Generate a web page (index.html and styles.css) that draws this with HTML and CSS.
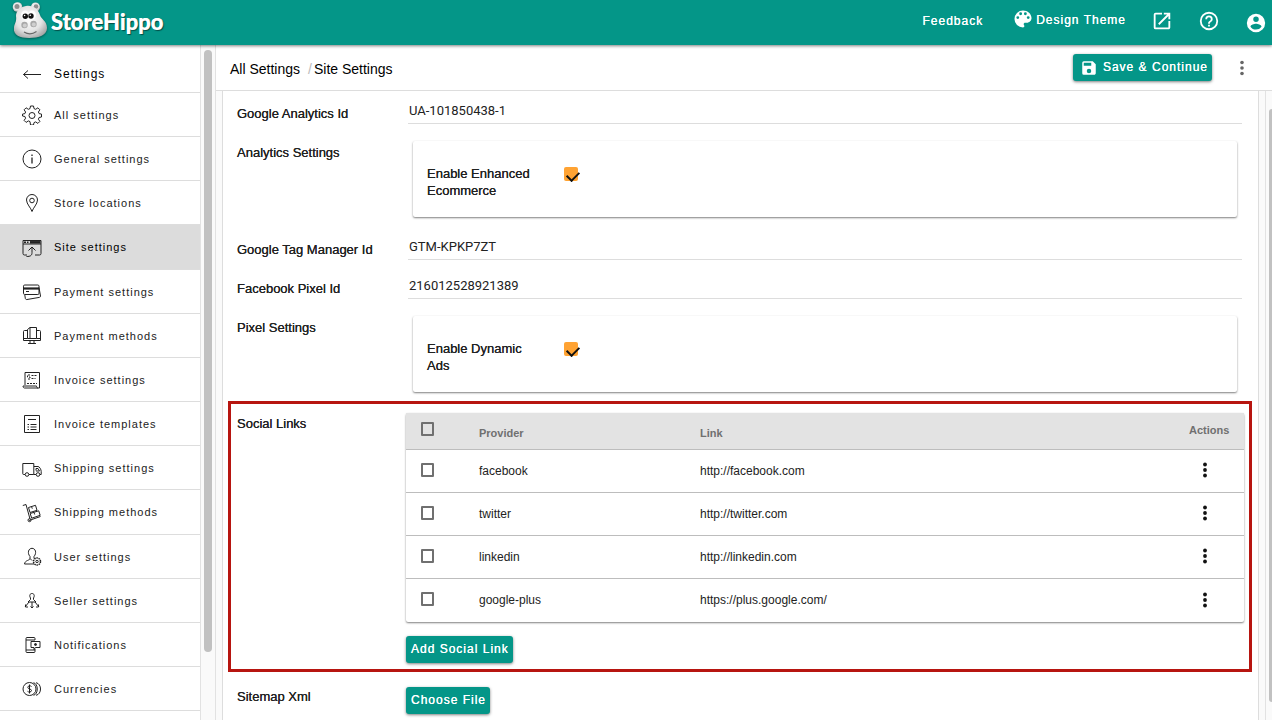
FILE: index.html
```html
<!DOCTYPE html>
<html lang="en">
<head>
<meta charset="utf-8">
<title>Site Settings</title>
<link rel="stylesheet" href="styles.css">
</head>
<body>
<header class="topbar">
  <a class="brand" href="#">
    <svg class="hippo" viewBox="0 0 36 38" aria-hidden="true">
      <defs>
        <radialGradient id="skin" cx="45%" cy="40%" r="65%"><stop offset="0" stop-color="#fff"/><stop offset=".6" stop-color="#e4e4e4"/><stop offset="1" stop-color="#a5a5a5"/></radialGradient>
      </defs>
      <circle cx="5.500" cy="6" r="4.800" fill="url(#skin)"/><circle cx="5" cy="5.500" r="2.500" fill="#8d8d8d"/>
      <circle cx="23.500" cy="6" r="4.500" fill="url(#skin)"/><circle cx="24" cy="5.500" r="2.300" fill="#8d8d8d"/>
      <path d="M14 5C21 4 26 8 28 14C29 18 35 20 35 27C35 34 27 37 17 37C8 37 1 34 2 27C2 23 5 21 4 15C4 10 8 6 14 5Z" fill="url(#skin)"/>
      <ellipse cx="13" cy="14" rx="4" ry="4.500" fill="#fff"/><ellipse cx="20" cy="14" rx="4" ry="4.500" fill="#fff"/>
      <ellipse cx="13.300" cy="15.300" rx="2.700" ry="2.700" fill="#111"/><ellipse cx="19" cy="15" rx="2.700" ry="2.700" fill="#111"/>
      <circle cx="12.600" cy="14.500" r=".8" fill="#fff"/><circle cx="18.300" cy="14.200" r=".8" fill="#fff"/>
      <circle cx="12.500" cy="24" r="3.200" fill="#a8a8a8"/><circle cx="12.800" cy="24.400" r="2" fill="#cfcfcf"/>
      <circle cx="21.500" cy="23" r="3.200" fill="#a8a8a8"/><circle cx="21.800" cy="23.400" r="2" fill="#cfcfcf"/>
      <path d="M12 31C16 33.500 21 33 24.500 30.500" fill="none" stroke="#666" stroke-width="1.200"/>
    </svg>
    <span>StoreHippo</span>
  </a>
  <nav class="tools">
    <a class="feedback" href="#">Feedback</a>
    <a class="theme" href="#">
      <svg class="i18" viewBox="2.500 2.500 19 19"><path fill="currentColor" d="M12 3a9 9 0 0 0 0 18c.830 0 1.500-.670 1.500-1.500 0-.390-.150-.740-.390-1.010-.230-.260-.380-.610-.380-.990 0-.830.670-1.500 1.500-1.500H16c2.760 0 5-2.240 5-5 0-4.420-4.030-8-9-8zm-5.500 9a1.500 1.500 0 1 1 0-3 1.500 1.500 0 0 1 0 3zm3-4a1.500 1.500 0 1 1 0-3 1.500 1.500 0 0 1 0 3zm5 0a1.500 1.500 0 1 1 0-3 1.500 1.500 0 0 1 0 3zm3 4a1.500 1.500 0 1 1 0-3 1.500 1.500 0 0 1 0 3z"/></svg>
      <span>Design Theme</span>
    </a>
    <button class="tool" aria-label="Open in new window"><svg class="i22" viewBox="0 0 24 24"><path fill="currentColor" d="M19 19H5V5h7V3H5a2 2 0 0 0-2 2v14a2 2 0 0 0 2 2h14c1.100 0 2-.9 2-2v-7h-2v7zM14 3v2h3.590l-9.830 9.830 1.410 1.410L19 6.410V10h2V3h-7z"/></svg></button>
    <button class="tool" aria-label="Help"><svg class="i22" viewBox="0 0 24 24"><path fill="currentColor" d="M11 18h2v-2h-2v2zm1-16a10 10 0 1 0 0 20 10 10 0 0 0 0-20zm0 18a8 8 0 1 1 0-16 8 8 0 0 1 0 16zm0-14a4 4 0 0 0-4 4h2c0-1.100.9-2 2-2s2 .9 2 2c0 2-3 1.750-3 5h2c0-2.250 3-2.500 3-5a4 4 0 0 0-4-4z"/></svg></button>
    <button class="tool account" aria-label="Account"><svg class="i22" viewBox="0 0 24 24"><path fill="currentColor" d="M12 2a10 10 0 1 0 0 20 10 10 0 0 0 0-20zm0 3a3 3 0 1 1 0 6 3 3 0 0 1 0-6zm0 14.200a7.200 7.200 0 0 1-6-3.220c.030-1.990 4-3.080 6-3.080 1.990 0 5.970 1.090 6 3.080a7.200 7.200 0 0 1-6 3.220z"/></svg></button>
  </nav>
</header>

<div class="workspace">
  <nav class="sidebar">
    <a class="item head" href="#"><svg class="ico" viewBox="0 0 20 20"><path d="M19 10.500H1.500M6 6.500L1.500 10.500L6 14.500"/></svg>Settings</a>
    <a class="item" href="#"><svg class="ico" viewBox="0 0 20 20"><path d="M8.500 1h3l.5 2.600 1.700.7 2.200-1.500 2 2-1.500 2.200.7 1.600 2.400.5v2.900l-2.400.5-.7 1.700 1.500 2.200-2 2-2.200-1.500-1.700.7-.5 2.400h-3L8 16.600l-1.700-.7-2.200 1.500-2-2 1.500-2.200-.7-1.700-2.400-.5V9.100l2.400-.5.7-1.600-1.500-2.200 2-2 2.200 1.500L8 3.600z"/><circle cx="10" cy="10.500" r="3"/></svg>All settings</a>
    <a class="item" href="#"><svg class="ico" viewBox="0 0 20 20"><circle cx="10" cy="10" r="9"/><path d="M10 8.500v6M10 5.500v1.500" stroke-width="1.300"/></svg>General settings</a>
    <a class="item" href="#"><svg class="ico" viewBox="0 0 20 20"><path d="M10 18.500C9 15 4.500 11 4.500 7a5.500 5.500 0 0 1 11 0c0 4-4.500 8-5.500 11.500z"/><circle cx="10" cy="7.500" r="2.300"/></svg>Store locations</a>
    <a class="item active" href="#"><svg class="ico" viewBox="0 0 20 20"><path d="M5 17H2.500A1.500 1.500 0 0 1 1 15.500v-13h18v13a1.500 1.500 0 0 1-1.500 1.500H13M1 6h18"/><path d="M2 4.300h2M5 4.300h1.500" stroke-width="1.500"/><path d="M8 4.300h10.500" stroke-width="2.500"/><path d="M4.500 18.500c4 0 5.500-1 5.500-4V9M6.500 12.500L10 9l3.500 3.500"/></svg>Site settings</a>
    <a class="item" href="#"><svg class="ico" viewBox="0 0 20 20"><rect x="1.500" y="3" width="15.500" height="9.500" rx="1.200"/><path d="M2 6.500h15" stroke-width="2.200"/><path d="M4 9.500h3"/><path d="M17 5.500l1.500 8.500c0 1-.5 1.300-1.200 1.400L5 17.500c-1 .2-1.500-.3-1.700-1.200L2.800 13"/></svg>Payment settings</a>
    <a class="item" href="#"><svg class="ico" viewBox="0 0 20 20"><path d="M5.500 4.500H2.500A1 1 0 0 0 1.500 5.500v9h17v-9a1 1 0 0 0-1-1h-3M1.500 12.500h4M14.500 12.500h4M8 15v2M12 15v2M6 17.500h8"/><path d="M5.500 12.500v-9L8 1.500h6.500v11zM8 1.500v11"/></svg>Payment methods</a>
    <a class="item" href="#"><svg class="ico" viewBox="0 0 20 20"><path d="M3 15V2.500h14.500v15.500H2.500c-1 0-1.500-1-1.500-2h13.500c0 1 .5 2 1.500 2"/><path d="M8 5H5.500v2H8v2H5.500M9.500 5.500h5M9.500 8.500h4M5 13.500h10" stroke-dasharray="2 1"/></svg>Invoice settings</a>
    <a class="item" href="#"><svg class="ico" viewBox="0 0 20 20"><path d="M2.500 1.500h15v17h-15zM6 5.500h8M8.500 10.500h6M8.500 13h6M8.500 15.500h6"/><path d="M5.500 10.500h1.500M5.500 13h1.500M5.500 15.500h1.500"/></svg>Invoice templates</a>
    <a class="item" href="#"><svg class="ico" viewBox="0 0 20 20"><path d="M3 16.500H1.500a.7.700 0 0 1-.7-.7V5.500h11v11H7M12 8.500h4c1.500 0 3.200 3 3.200 5v3h-1.400M14 12.500V10.500h2l1.500 2.500h-3.500M12 16.500h2"/><circle cx="5" cy="16.500" r="1.800"/><circle cx="16" cy="16.500" r="1.800"/></svg>Shipping settings</a>
    <a class="item tall" href="#"><svg class="ico" viewBox="0 0 20 20"><path d="M.8 2.500L4 1.500l4 14.500M7 17.500l11.500-4M6.500 4.500l7-2.200 1.500 5-7 2.200zM8.200 10.500l8.500-2.700 1.500 4.500-8.500 2.900zM9.500 3.500l.8 2.200M12 9.500l.7 2"/><circle cx="7.500" cy="17.200" r="1.500"/></svg>Shipping methods</a>
    <a class="item" href="#"><svg class="ico" viewBox="0 0 20 20"><path d="M8 11.500V9.500C5 6 6.500 1.300 10 1.300S15 6 12 9.500v2M8 11.500c0 2-5 1.500-5.500 5.500H12M8 11.500l2 2"/><circle cx="15" cy="14.500" r="3.500" stroke-dasharray="1.500 .7" stroke-width="1.500"/><circle cx="15" cy="14.500" r="1.200"/></svg>User settings</a>
    <a class="item" href="#"><svg class="ico" viewBox="0 0 20 20"><path d="M8.500 7C7 4.500 8 2.500 10 2.500S13 4.500 11.500 7v1.500l2.500 2.500H6l2.500-2.500zM10 11v6M7 11l-4 5M13 11l4 5M3.500 13.500v2.500H6M16.500 13.500v2.500H14M8.500 15.500L10 17l1.500-1.500"/></svg>Seller settings</a>
    <a class="item" href="#"><svg class="ico" viewBox="0 0 20 20"><path d="M13 5V3.500a1 1 0 0 0-1-1H5a1 1 0 0 0-1 1v13a1 1 0 0 0 1 1h7a1 1 0 0 0 1-1V14M4 5h9M4 15h9"/><path d="M9 6.500h9v6h-4.500L12 14.500v-2H9z"/><circle cx="13.500" cy="9.500" r="1" fill="#222"/></svg>Notifications</a>
    <a class="item" href="#"><svg class="ico" viewBox="0 0 20 20"><circle cx="7.500" cy="10" r="6.500"/><path d="M9.500 7.500C8.500 6.500 5.800 6.500 5.800 8.400S9.500 9.700 9.500 11.500 6.500 13.500 5.500 12.300M7.500 5.500v9M11.500 3.700c5 1 5 11.600 0 12.600M14 3.700c6 1 6 11.600 0 12.600"/></svg>Currencies</a>
    <div class="item"></div>
  </nav>
  <div class="track"><div class="thumb"></div></div>

  <main class="page">
    <div class="crumbbar">
      <nav class="crumbs"><a href="#">All Settings</a><span class="slash">/</span><span>Site Settings</span></nav>
      <div class="actions">
        <button class="btn save"><svg class="i18" viewBox="0 0 24 24"><path fill="currentColor" d="M17 3H5a2 2 0 0 0-2 2v14a2 2 0 0 0 2 2h14c1.100 0 2-.9 2-2V7l-4-4zm-5 16a3 3 0 1 1 0-6 3 3 0 0 1 0 6zm3-10H5V5h10v4z"/></svg>Save &amp; Continue</button>
        <button class="dots grey" aria-label="More"><svg viewBox="0 0 6 16"><circle cx="3" cy="2.500" r="1.800"/><circle cx="3" cy="8" r="1.800"/><circle cx="3" cy="13.500" r="1.800"/></svg></button>
      </div>
    </div>
    <div class="scroller">
      <form class="form">
        <div class="row"><label for="ga">Google Analytics Id</label><input class="text" id="ga" value="UA-101850438-1"></div>
        <div class="row"><span class="label">Analytics Settings</span>
          <div class="panel"><label for="ee">Enable Enhanced Ecommerce</label><input class="tick" type="checkbox" id="ee" checked></div></div>
        <div class="row"><label for="gtm">Google Tag Manager Id</label><input class="text" id="gtm" value="GTM-KPKP7ZT"></div>
        <div class="row"><label for="fb">Facebook Pixel Id</label><input class="text" id="fb" value="216012528921389"></div>
        <div class="row"><span class="label">Pixel Settings</span>
          <div class="panel"><label for="da">Enable Dynamic Ads</label><input class="tick" type="checkbox" id="da" checked></div></div>

        <section class="row highlight"><span class="label">Social Links</span>
          <div>
            <table class="links">
              <thead><tr><th class="c-box"><input class="box" type="checkbox" aria-label="Select all"></th><th class="c-name">Provider</th><th>Link</th><th class="c-act">Actions</th></tr></thead>
              <tbody>
                <tr><td><input class="box" type="checkbox" aria-label="Select facebook"></td><td>facebook</td><td>http://facebook.com</td><td><button type="button" class="dots" aria-label="Actions for facebook"><svg viewBox="0 0 6 16"><circle cx="3" cy="2.500" r="1.900"/><circle cx="3" cy="8" r="1.900"/><circle cx="3" cy="13.500" r="1.900"/></svg></button></td></tr>
                <tr><td><input class="box" type="checkbox" aria-label="Select twitter"></td><td>twitter</td><td>http://twitter.com</td><td><button type="button" class="dots" aria-label="Actions for twitter"><svg viewBox="0 0 6 16"><circle cx="3" cy="2.500" r="1.900"/><circle cx="3" cy="8" r="1.900"/><circle cx="3" cy="13.500" r="1.900"/></svg></button></td></tr>
                <tr><td><input class="box" type="checkbox" aria-label="Select linkedin"></td><td>linkedin</td><td>http://linkedin.com</td><td><button type="button" class="dots" aria-label="Actions for linkedin"><svg viewBox="0 0 6 16"><circle cx="3" cy="2.500" r="1.900"/><circle cx="3" cy="8" r="1.900"/><circle cx="3" cy="13.500" r="1.900"/></svg></button></td></tr>
                <tr><td><input class="box" type="checkbox" aria-label="Select google-plus"></td><td>google-plus</td><td>https://plus.google.com/</td><td><button type="button" class="dots" aria-label="Actions for google-plus"><svg viewBox="0 0 6 16"><circle cx="3" cy="2.500" r="1.900"/><circle cx="3" cy="8" r="1.900"/><circle cx="3" cy="13.500" r="1.900"/></svg></button></td></tr>
              </tbody>
            </table>
            <button type="button" class="btn add">Add Social Link</button>
          </div>
        </section>
        <div class="row sitemap"><span class="label">Sitemap Xml</span><div><button type="button" class="btn">Choose File</button></div></div>
      </form>
      <div class="gutter"><div class="thumb-right"></div></div>
    </div>
  </main>
</div>
</body>
</html>
```
FILE: styles.css
```css
* { box-sizing: border-box; }
body {
  margin: 0;
  height: 100vh;
  display: flex;
  flex-direction: column;
  overflow: hidden;
  background: #fff;
  color: #222;
  font: 13px/17px "Liberation Sans", Arial, sans-serif;
}
a { color: inherit; text-decoration: none; }
button { font: inherit; color: inherit; background: none; border: 0; padding: 0; cursor: pointer; }
svg { display: block; flex: none; }
.i18 { width: 18px; height: 18px; }
.i22 { width: 22px; height: 22px; }

.topbar {
  position: relative;
  z-index: 1;
  flex: none;
  height: 45px;
  display: flex;
  align-items: center;
  justify-content: space-between;
  padding: 0 5px 0 12px;
  background: #049688;
  color: #fff;
  box-shadow: 0 1px 3px rgba(0, 0, 0, .5);
}
.brand {
  display: flex;
  align-items: center;
  gap: 3px;
  padding-bottom: 5px;
  font: 900 22px/28px Lato, sans-serif;
  text-shadow: 1px 1px 1px rgba(0, 0, 0, .5), 0 0 0 #fff;
}
.brand span { padding-top: 4px; }
.hippo { width: 36px; height: 38px; filter: drop-shadow(0 1px 1px rgba(0, 0, 0, .4)); }
.tools {
  display: flex;
  align-items: center;
  padding-bottom: 4px;
  font-size: 12px;
  letter-spacing: 1px;
  text-shadow: 0 0 0 #fff;
}
.feedback { padding-top: 2px; }
.theme { display: flex; align-items: center; gap: 4px; margin: 0 25px 0 31px; }
.theme svg { margin-bottom: 4px; }
.tool + .tool { margin-left: 25px; }
.account { padding-top: 4px; }

.workspace { flex: 1; min-height: 0; display: flex; }
.sidebar { width: 200px; flex: none; overflow: hidden; }
.item {
  height: 44px;
  display: flex;
  align-items: center;
  gap: 12px;
  padding: 1px 0 0 22px;
  border-bottom: 1px solid #ddd;
  font-size: 11px;
  letter-spacing: 1px;
  color: #222;
}
.head { height: 48px; padding-top: 11px; font-size: 12px; color: #000; }
.tall { height: 45px; }
.active { height: 45px; background: #dcdcdc; color: #000; }
.ico { width: 20px; height: 20px; fill: none; stroke: #222; stroke-width: 1; }

.track {
  width: 16px;
  flex: none;
  padding: 5px 3px;
  background: #fafafa;
  border: solid #e2e2e2;
  border-width: 0 1px;
}
.thumb { height: calc(90% + 3px); width: 8px; border-radius: 4px; background: #c1c1c1; }

.page { flex: 1; min-width: 0; display: flex; flex-direction: column; }
.crumbbar {
  flex: none;
  height: 46px;
  display: flex;
  align-items: center;
  justify-content: space-between;
  padding: 0 20px 0 14px;
  border-bottom: 1px solid #ddd;
}
.crumbs { display: flex; padding-top: 3px; font-size: 14px; color: #000; }
.slash { margin: 0 2px 0 8px; color: #bbb; }
.actions { display: flex; align-items: center; gap: 20px; }
.btn {
  display: inline-flex;
  align-items: center;
  height: 27px;
  padding: 0 4px 0 5px;
  border-radius: 3px;
  background: #049688;
  color: #fff;
  font-size: 12px;
  letter-spacing: 1px;
  text-shadow: 0 0 0 #fff;
  box-shadow: 0 1px 3px rgba(0, 0, 0, .5);
}
.save { gap: 5px; padding-left: 7px; }
.dots { display: block; width: 20px; height: 20px; padding: 2px 7px; }
.dots svg { width: 6px; height: 16px; fill: #111; }
.grey { height: 22px; }
.grey svg { fill: #666; }

.scroller { flex: 1; min-height: 0; display: flex; overflow: hidden; background: #fafafa; padding-left: 6px; }
.form {
  flex: 1;
  min-width: 0;
  margin-top: -6px;
  padding: 0 14px;
  height: calc(100% + 6px);
  background: #fff;
  border: solid #ddd;
  border-width: 0 1px;
}
.row { display: grid; grid-template-columns: 169px minmax(0, 1fr); align-items: start; }
.row > label, .label { padding-top: 20px; text-shadow: 0 0 0 #222; }
.text {
  width: auto;
  height: 39px;
  margin: 0 2px;
  padding: 14px 1px 2px;
  border: 0;
  border-bottom: 1px solid #ddd;
  background: none;
  color: #222;
  font: 13px/22px Roboto, sans-serif;
  outline: 0;
}
.panel {
  display: flex;
  align-items: flex-start;
  height: 76px;
  margin: 17px 7px 4px;
  padding: 24px 14px;
  border-radius: 2px;
  box-shadow: 0 1px 2px rgba(0, 0, 0, .5);
}
.panel label { width: 137px; padding-right: 20px; text-shadow: 0 0 0 #222; }
.tick, .box { appearance: none; display: block; margin: 0; border-radius: 2px; }
.tick {
  width: 14px;
  height: 14px;
  margin-top: 2px;
  background: #ffa333;
  position: relative;
}
.tick::after {
  content: "";
  position: absolute;
  left: 5px;
  top: 2px;
  width: 6px;
  height: 10px;
  border: solid #111;
  border-width: 0 2px 2px 0;
  transform: rotate(45deg);
}
.highlight { margin: 5px -8px 15px -9px; padding: 9px 5px 6px 6px; border: 3px solid #b71510; }
.highlight .label { padding-top: 2px; }

.links {
  width: 100%;
  table-layout: fixed;
  border-collapse: separate;
  border-spacing: 0;
  border-radius: 2px;
  box-shadow: 0 1px 2px rgba(0, 0, 0, .5);
  font-size: 12px;
}
.links th, .links td { padding: 0; text-align: left; vertical-align: middle; height: 43px; }
.links th {
  height: 37px;
  padding-top: 4px;
  background: #e3e3e3;
  border-bottom: 1px solid #bdbdbd;
  color: #707070;
  font-size: 11px;
}
.links th.c-box, .links th.c-act { padding: 0 0 2px; }
.links tr:not(:last-child) td { border-bottom: 1px solid #bdbdbd; }
.c-box { width: 73px; }
.c-name { width: 221px; }
.c-act { width: 55px; }
.box { width: 13px; height: 14px; margin: 0 0 3px 15px; border: 2px solid #707070; border-radius: 1px; }
.links .dots { margin: 0 0 2px 6px; }
.add { margin-top: 14px; }
.sitemap .label { padding-top: 1px; }

.gutter { flex: none; width: 13px; padding: 18px 0 18px 3px; display: flex; justify-content: flex-end; }
.thumb-right { width: 3px; border-radius: 3px 0 0 3px; background: #c1c1c1; }
.gutter::before { content: ""; margin: -18px 3px -18px 0; width: 1px; background: #e2e2e2; }
```
